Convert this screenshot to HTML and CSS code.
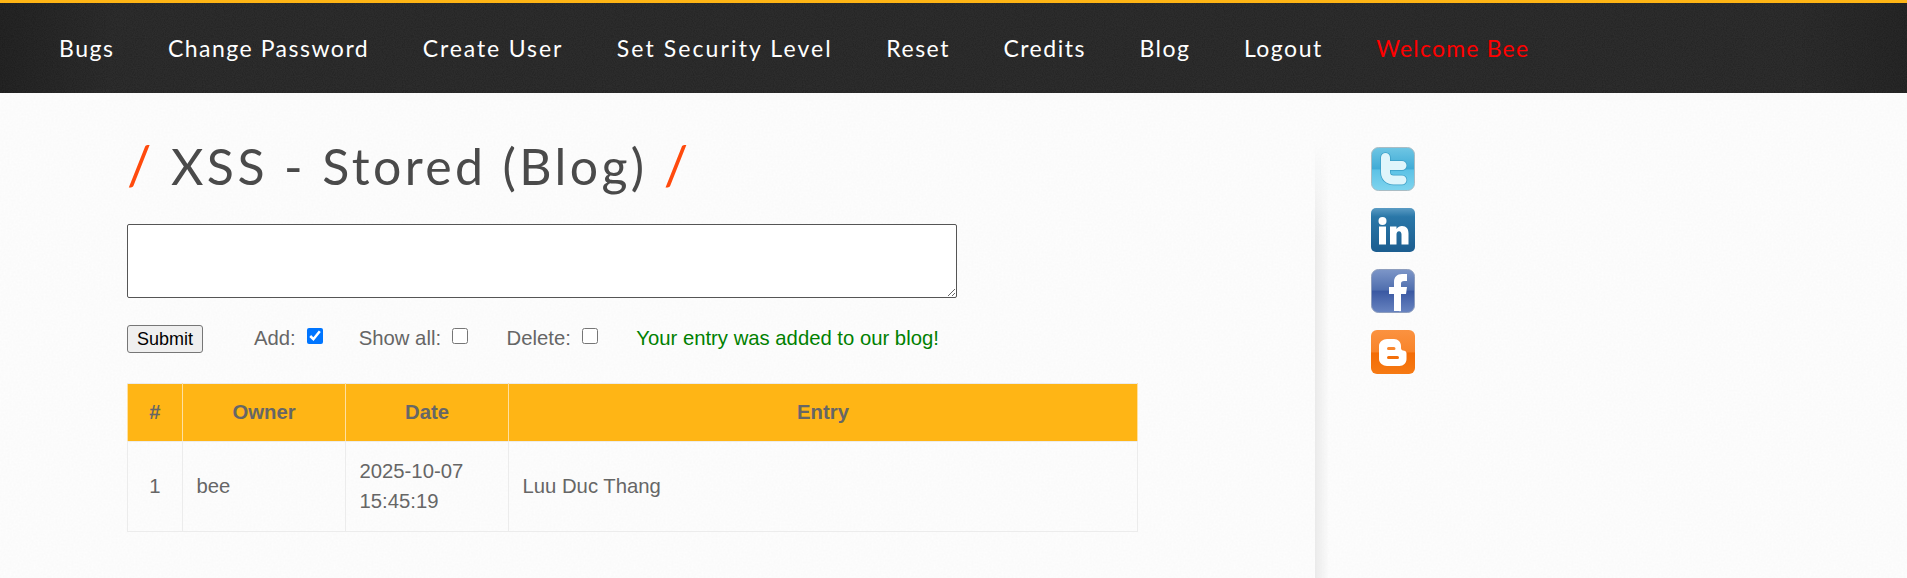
FILE: index.html
```html
<!DOCTYPE html>
<html lang="en">
<head>
    <meta charset="UTF-8">
    <meta name="viewport" content="width=device-width, initial-scale=1.0">
    <title>XSS - Stored (Blog)</title>
    <link rel="stylesheet" href="styles.css">
</head>
<body>
    <header id="menu">
        <ul>
            <li><a href="#">Bugs</a></li>
            <li><a href="#">Change Password</a></li>
            <li><a href="#" class="create">Create User</a></li>
            <li><a href="#" class="wide">Set Security Level</a></li>
            <li><a href="#">Reset</a></li>
            <li><a href="#">Credits</a></li>
            <li><a href="#">Blog</a></li>
            <li><a href="#">Logout</a></li>
            <li><a href="#" class="welcome">Welcome Bee</a></li>
        </ul>
    </header>

    <div id="page">
        <main id="main">
            <h1><span class="slash">/</span> XSS - Stored (Blog) <span class="slash">/</span></h1>

            <form id="entry-form">
                <textarea class="entry-box"></textarea>
                <div class="form-row">
                    <button type="button" class="submit-button">Submit</button>
                    <label class="option first">Add: <input type="checkbox" checked></label>
                    <label class="option">Show all: <input type="checkbox"></label>
                    <label class="option">Delete: <input type="checkbox"></label>
                    <span class="added">Your entry was added to our blog!</span>
                </div>
            </form>

            <table class="blog-table">
                <thead>
                    <tr>
                        <th class="col-id">#</th>
                        <th class="col-owner">Owner</th>
                        <th class="col-date">Date</th>
                        <th>Entry</th>
                    </tr>
                </thead>
                <tbody>
                    <tr>
                        <td class="cell-id">1</td>
                        <td>bee</td>
                        <td>2025-10-07<br>15:45:19</td>
                        <td>Luu Duc Thang</td>
                    </tr>
                </tbody>
            </table>
        </main>

        <aside id="side">
            <a href="#" class="social">
                <svg viewBox="0 0 44 44" width="44" height="44">
                    <defs>
                        <linearGradient id="tw" x1="0" y1="0" x2="0" y2="1">
                            <stop offset="0" stop-color="#6fc6e4"/>
                            <stop offset="0.5" stop-color="#3fabd6"/>
                            <stop offset="0.52" stop-color="#5cc2e6"/>
                            <stop offset="1" stop-color="#7fd4ee"/>
                        </linearGradient>
                    </defs>
                    <rect x="0.5" y="0.5" width="43" height="43" rx="7" fill="url(#tw)" stroke="#a9bcc4"/>
                    <path d="M14.500 10.500V25c0 5 3 8 8 8H31M14.500 18.500H31" fill="none" stroke="#3b9fc6" stroke-width="10.500" stroke-linecap="round"/>
                    <path d="M14.500 10.500V25c0 5 3 8 8 8H31M14.500 18.500H31" fill="none" stroke="#dff5fb" stroke-width="9" stroke-linecap="round"/>
                </svg>
            </a>
            <a href="#" class="social">
                <svg viewBox="0 0 44 44" width="44" height="44">
                    <defs>
                        <linearGradient id="li" x1="0" y1="0" x2="0" y2="1">
                            <stop offset="0" stop-color="#5b9cc4"/>
                            <stop offset="0.2" stop-color="#2a77a8"/>
                            <stop offset="1" stop-color="#1c5d8f"/>
                        </linearGradient>
                    </defs>
                    <rect width="44" height="44" rx="5" fill="url(#li)"/>
                    <circle cx="11.500" cy="13" r="4" fill="#fff"/>
                    <rect x="8" y="18.500" width="7" height="18" fill="#fff"/>
                    <path d="M19 18.500h6.500v2.500c1.200-2 3.300-3 5.500-3 4.500 0 6.500 2.800 6.500 7.500v11h-7v-10c0-2-.8-3.300-2.500-3.300s-2.500 1.300-2.500 3.300v10H19z" fill="#fff"/>
                </svg>
            </a>
            <a href="#" class="social">
                <svg viewBox="0 0 44 44" width="44" height="44">
                    <defs>
                        <linearGradient id="fb" x1="0" y1="0" x2="0" y2="1">
                            <stop offset="0" stop-color="#7d96c8"/>
                            <stop offset="0.48" stop-color="#4f6eae"/>
                            <stop offset="0.5" stop-color="#3a58a2"/>
                            <stop offset="1" stop-color="#6884c0"/>
                        </linearGradient>
                    </defs>
                    <rect x="0.500" y="0.500" width="43" height="43" rx="7" fill="url(#fb)" stroke="#8d9dbd"/>
                    <path d="M23 42V25h-5v-7h5v-5c0-5 3-8 8-8h5v7h-3c-2 0-3 1-3 2.500V18h6l-1 7h-5v17a2 2 0 0 1-2 0z" fill="#fff"/>
                </svg>
            </a>
            <a href="#" class="social">
                <svg viewBox="0 0 44 44" width="44" height="44">
                    <defs>
                        <linearGradient id="bl" x1="0" y1="0" x2="0" y2="1">
                            <stop offset="0" stop-color="#fb9240"/>
                            <stop offset="0.5" stop-color="#f8842a"/>
                            <stop offset="0.52" stop-color="#f36c06"/>
                            <stop offset="1" stop-color="#f67a14"/>
                        </linearGradient>
                    </defs>
                    <rect width="44" height="44" rx="6" fill="url(#bl)"/>
                    <path fill-rule="evenodd" d="M16 9h7c4 0 7 3 7 7v2c0 1.500 1 2.500 2 2.500 2 0 3.500 1 3.500 3V29c0 4-3 7-7 7H16c-4 0-8-3-8-7V16c0-4 4-7 8-7zm1.500 8a1.500 1.500 0 0 0 0 3H23a1.500 1.500 0 0 0 0-3zm0 9a1.500 1.500 0 0 0 0 3h9a1.500 1.500 0 0 0 0-3z" fill="#fff"/>
                </svg>
            </a>
        </aside>
    </div>
</body>
</html>
```

FILE: styles.css
```css
html, body {
    margin: 0;
    padding: 0;
}
body {
    font-family: "Liberation Sans", Arial, sans-serif;
    font-size: 20.3px;
    color: #666;
    height: 578px;
    overflow: hidden;
    background-color: #fefefe;
    background-image: url("data:image/svg+xml,%3Csvg xmlns='http://www.w3.org/2000/svg' width='300' height='300'%3E%3Cfilter id='n'%3E%3CfeTurbulence type='fractalNoise' baseFrequency='0.5' numOctaves='2'/%3E%3CfeColorMatrix values='0 0 0 0 0 0 0 0 0 0 0 0 0 0 0 0 0 0 0.02 0'/%3E%3C/filter%3E%3Crect width='300' height='300' filter='url(%23n)'/%3E%3C/svg%3E");
}
#menu {
    height: 90px;
    border-top: 3px solid #ffb515;
    background-color: #222;
    background-image:
        linear-gradient(90deg, rgba(0, 0, 0, 0.2), rgba(0, 0, 0, 0) 6%, rgba(0, 0, 0, 0) 94%, rgba(0, 0, 0, 0.15)),
        url("data:image/svg+xml,%3Csvg xmlns='http://www.w3.org/2000/svg' width='200' height='90'%3E%3Cfilter id='n'%3E%3CfeTurbulence type='fractalNoise' baseFrequency='0.9' numOctaves='2'/%3E%3CfeColorMatrix values='0 0 0 0 1 0 0 0 0 1 0 0 0 0 1 0 0 0 0.07 0'/%3E%3C/filter%3E%3Crect width='200' height='90' filter='url(%23n)'/%3E%3C/svg%3E");
}
#menu ul {
    display: flex;
    gap: 53.5px;
    list-style: none;
    margin: 0;
    padding: 0 0 0 59px;
    height: 100%;
    align-items: center;
}
#menu a {
    font-family: "Lato", sans-serif;
    font-size: 23px;
    letter-spacing: 1.5px;
    color: #fff;
    text-decoration: none;
}
#menu a.create {
    letter-spacing: 1.9px;
}
#menu a.wide {
    letter-spacing: 2.1px;
}
#menu a.welcome {
    color: #f00;
    letter-spacing: 1.2px;
}
#page {
    display: flex;
    height: 485px;
}
#main {
    width: 1188px;
    padding-left: 127px;
}
h1 {
    font-family: "Lato", sans-serif;
    font-weight: 400;
    font-size: 50px;
    height: 60px;
    line-height: 60px;
    letter-spacing: 3.4px;
    color: #4a4a4a;
    margin: 43px 0 28px;
}
.slash {
    color: #ff4a0d;
    font-size: 54px;
    line-height: 0;
}
#entry-form {
    margin: 0;
}
.entry-box {
    display: block;
    box-sizing: border-box;
    width: 830px;
    height: 74px;
    border: 1px solid #555;
    border-radius: 2px;
    background: #fff;
    margin: 0;
}
.form-row {
    display: flex;
    align-items: center;
    height: 28px;
    margin-top: 27px;
}
.submit-button {
    box-sizing: border-box;
    width: 76px;
    height: 28px;
    padding: 0;
    font-family: "Liberation Sans", Arial, sans-serif;
    font-size: 18px;
    color: #000;
    background: #efefef;
    border: 1px solid #767676;
    border-radius: 3px;
    margin-right: 51px;
}
.option {
    display: flex;
    align-items: center;
    gap: 11px;
    margin-right: 38.5px;
    padding-bottom: 2px;
}
.option.first {
    margin-right: 36px;
}
.option input {
    width: 16px;
    height: 16px;
    margin: 0 0 4px;
}
.added {
    color: #008000;
    padding-bottom: 2px;
}
.blog-table {
    border-collapse: collapse;
    table-layout: fixed;
    width: 1011px;
    margin-top: 30px;
}
.blog-table th,
.blog-table td {
    border: 1px solid #ececec;
    text-align: left;
    padding: 0 13.5px;
}
.blog-table th {
    height: 57px;
    background: #ffb515;
    text-align: center;
    font-weight: bold;
    border-color: #ffe0a0;
    border-top-color: #ececec;
    border-bottom-color: #ececec;
}
.blog-table td {
    height: 87px;
    line-height: 30px;
    padding-bottom: 2px;
}
.blog-table td.cell-id {
    text-align: center;
}
.col-id {
    width: 27px;
}
.col-owner,
.col-date {
    width: 135px;
}
#side {
    position: relative;
    flex: 1;
    display: flex;
    flex-direction: column;
    gap: 17px;
    padding: 54px 0 0 56px;
}
/* soft shadow falling from the main column */
#side::before {
    content: "";
    position: absolute;
    left: 0;
    top: 0;
    bottom: 0;
    width: 14px;
    background: linear-gradient(90deg, #eaeaea, rgba(251, 251, 251, 0));
    -webkit-mask-image: linear-gradient(180deg, transparent 50px, #000 150px);
    mask-image: linear-gradient(180deg, transparent 50px, #000 150px);
}
.social {
    display: block;
    width: 44px;
    height: 44px;
}
.social svg {
    display: block;
}
```
